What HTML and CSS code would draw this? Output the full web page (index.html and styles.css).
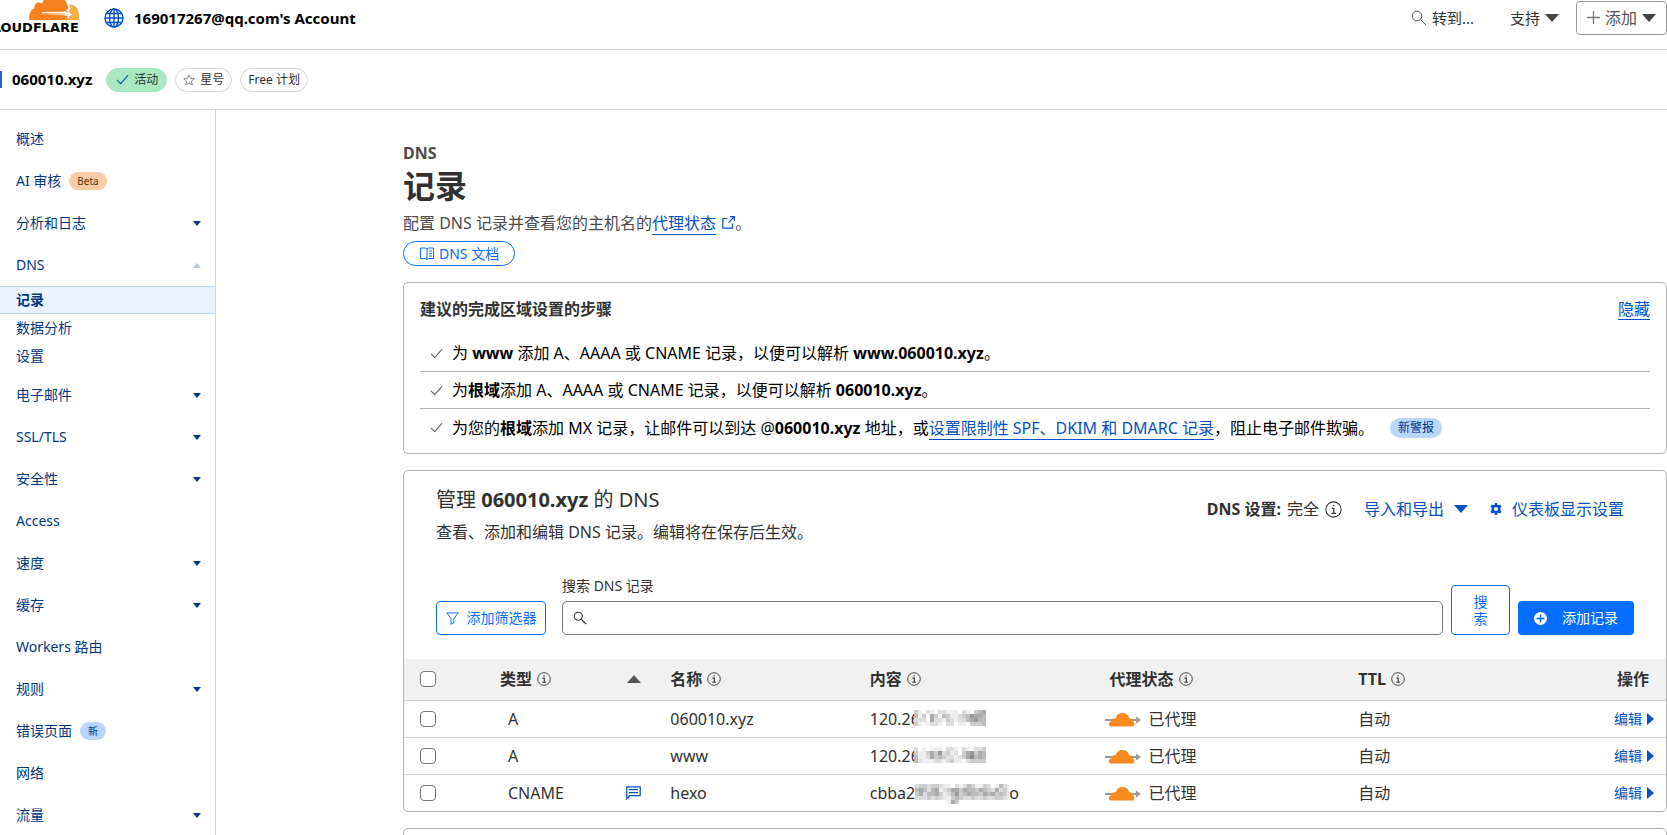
FILE: index.html
```html
<!DOCTYPE html>
<html lang="zh-CN">
<head>
    <meta charset="UTF-8">
    <meta name="viewport" content="width=device-width, initial-scale=1.0">
    <title>060010.xyz | DNS 记录</title>
    <link rel="stylesheet" href="styles.css">
</head>
<body>

    <!-- shared icons -->
    <svg class="sprite" aria-hidden="true">
        <symbol id="i-info" viewBox="0 0 16 16">
            <circle cx="8" cy="8" r="7.2" fill="none" stroke="currentColor"/>
            <path d="M6.3 7h2v4.5M6 11.7h4.4M7.4 4.4h1.3" fill="none" stroke="currentColor" stroke-width="1.2"/>
        </symbol>
        <symbol id="i-check" viewBox="0 0 14 12">
            <path d="M1 6.5l4 4L13 1.5" fill="none" stroke="currentColor" stroke-width="1.2"/>
        </symbol>
        <symbol id="i-search" viewBox="0 0 16 16">
            <circle cx="6" cy="6" r="4.6" fill="none" stroke="currentColor" stroke-width="1.3"/>
            <path d="M9.3 9.3L15 15" fill="none" stroke="currentColor" stroke-width="1.5"/>
        </symbol>
        <symbol id="i-proxy" viewBox="0 0 36 16">
            <path d="M0 7h31V4.5L36 8l-5 3.5V9H0z" fill="#999"/>
            <path d="M6 14.5c-2.6 0-3-5 .8-5.3C6.5 6.5 9 5.7 10.5 6.600 12 2.700 14 1 17.500 1c3.800 0 6 2.200 6.700 5.300 2-.4 3.200.6 3.200 2.600 2.600.6 2.600 5.600 0 5.600z" fill="#f6891f"/>
        </symbol>
    </svg>

    <header class="topbar">
        <a class="logo" href="#">
            <svg width="50" height="28" viewBox="0 0 50 28">
                <path d="M38 27c1-4 0-6.500-4-6.500L13 20.200c-.6-.2-.5-1 .2-1.100L34.500 18.800c2.600-.2 4.500-2.300 4.800-4C37.500 6.500 32 2 25.500 2c-6.500 0-11 4-12.500 8.500-3.600-2.400-8.300.2-7.700 5C2 15.900-.2 20.500.3 27z" fill="#f6821f"/>
                <path d="M37.500 27l1-3.500c1-3-.5-4.500-4-5l5-.5c3-1 2-6 .5-6.500 6-1 10.500 4.500 10 12v3.500z" fill="#fbad41"/>
                <path d="M12 21.500h22.500c3.500-.5 4.500-2 5-4.500 .5 2.500 1.500 3.800 4 4.500-2.500.7-3.500 2-4 4.500-.5-2.500-1.500-3.200-4-3.700z" fill="#fff"/>
            </svg>
            <span>CLOUDFLARE</span>
        </a>
        <a class="account" href="#">
            <svg width="20" height="20" viewBox="0 0 20 20" fill="none" stroke="#0051c3" stroke-width="1.4">
                <circle cx="10" cy="10" r="9"/>
                <ellipse cx="10" cy="10" rx="4.5" ry="9"/>
                <path d="M10 1v18M1 10h18M2.5 5.5h15M2.5 14.5h15"/>
            </svg>
            169017267@qq.com's Account
        </a>
        <div class="top-actions">
            <button class="goto">
                <svg width="16" height="16" viewBox="0 0 16 16" fill="none" stroke="#555"><circle cx="6" cy="6" r="4.8"/><path d="M9.5 9.5L15 15"/></svg>
                转到...
            </button>
            <button class="support">支持<i class="caret"></i></button>
            <button class="add">
                <svg width="13" height="13" viewBox="0 0 13 13"><path d="M6.5 0v13M0 6.5h13" stroke="#777" stroke-width="1.3"/></svg>
                添加<i class="caret"></i>
            </button>
        </div>
    </header>

    <div class="zonebar">
        <svg class="zone-icon" width="12" height="17" viewBox="0 0 12 17"><path d="M0 0h12v17H0z" fill="#2c62c9"/></svg>
        <h2>060010.xyz</h2>
        <span class="pill active"><svg width="13" height="11"><use href="#i-check"/></svg>活动</span>
        <button class="pill">
            <svg width="12" height="12" viewBox="0 0 12 12"><path d="M6 .9l1.5 3.500 3.800.3-2.900 2.500.9 3.700L6 8.900l-3.300 2 .9-3.700L.7 4.700l3.800-.3z" fill="none" stroke="#888"/></svg>
            星号
        </button>
        <span class="pill">Free 计划</span>
    </div>

    <div class="container">
        <nav class="sidebar">
            <a href="#">概述</a>
            <a href="#">AI 审核<span class="tag beta">Beta</span></a>
            <a href="#">分析和日志<i class="arrow"></i></a>
            <a href="#">DNS<i class="arrow up"></i></a>
            <div class="submenu">
                <a href="#" class="current">记录</a>
                <a href="#">数据分析</a>
                <a href="#">设置</a>
            </div>
            <a href="#">电子邮件<i class="arrow"></i></a>
            <a href="#">SSL/TLS<i class="arrow"></i></a>
            <a href="#">安全性<i class="arrow"></i></a>
            <a href="#">Access</a>
            <a href="#">速度<i class="arrow"></i></a>
            <a href="#">缓存<i class="arrow"></i></a>
            <a href="#">Workers 路由</a>
            <a href="#">规则<i class="arrow"></i></a>
            <a href="#">错误页面<span class="tag new">新</span></a>
            <a href="#">网络</a>
            <a href="#">流量<i class="arrow"></i></a>
        </nav>

        <main class="content">
            <div class="crumb">DNS</div>
            <h1>记录</h1>
            <p class="intro">配置 DNS 记录并查看您的主机名的<a href="#">代理状态</a>
                <svg width="13" height="13" viewBox="0 0 13 13" fill="none" stroke="#0051c3" stroke-width="1.2"><path d="M5.5 2.5H.8v9.7h9.7V7.5M8 .7h4.3V5M12.3.7L6.5 6.5"/></svg>。</p>
            <a class="docs" href="#">
                <svg width="14" height="13" viewBox="0 0 14 13" fill="none" stroke="#056dff"><path d="M.5 1h5L7 2l1.5-1h5v10.5h-5L7 12.5l-1.5-1h-5zM7 2v10M9 4h3M9 6.5h3M9 9h3"/></svg>
                DNS 文档
            </a>

            <section class="card steps">
                <div class="steps-head">
                    <h3>建议的完成区域设置的步骤</h3>
                    <a href="#">隐藏</a>
                </div>
                <ul>
                    <li><svg width="13" height="11"><use href="#i-check"/></svg><span>为 <b>www</b> 添加 A、AAAA 或 CNAME 记录，以便可以解析 <b>www.060010.xyz</b>。</span></li>
                    <li><svg width="13" height="11"><use href="#i-check"/></svg><span>为<b>根域</b>添加 A、AAAA 或 CNAME 记录，以便可以解析 <b>060010.xyz</b>。</span></li>
                    <li><svg width="13" height="11"><use href="#i-check"/></svg><span>为您的<b>根域</b>添加 MX 记录，让邮件可以到达 @<b>060010.xyz</b> 地址，或<a href="#">设置限制性 SPF、DKIM 和 DMARC 记录</a>，阻止电子邮件欺骗。</span><span class="tag alert">新警报</span></li>
                </ul>
            </section>

            <section class="card">
                <div class="manage-head">
                    <div>
                        <h2>管理 <b>060010.xyz</b> 的 DNS</h2>
                        <p>查看、添加和编辑 DNS 记录。编辑将在保存后生效。</p>
                    </div>
                    <div class="manage-links">
                        <span class="setup"><b>DNS 设置:</b> 完全 <svg width="17" height="17"><use href="#i-info"/></svg></span>
                        <button>导入和导出<i class="caret"></i></button>
                        <button>
                            <svg width="12" height="12" viewBox="0 0 12 12"><path d="M5 0h2l.4 1.7 1.2.6L10.3 1.5l1.2 1.9L10.3 4.8v2.4l1.2 1.4-1.2 1.9-1.7-.8-1.2.6L7 12H5l-.4-1.7-1.2-.6-1.7.8L.5 8.6l1.2-1.4V4.8L.5 3.4l1.2-1.9 1.7.8 1.2-.6zM6 4a2 2 0 100 4 2 2 0 000-4z" fill="#0051c3" fill-rule="evenodd"/></svg>
                            仪表板显示设置
                        </button>
                    </div>
                </div>

                <form class="filters" onsubmit="return false">
                    <button class="outline filter">
                        <svg width="13" height="13" viewBox="0 0 13 13" fill="none" stroke="#056dff"><path d="M.8.9h11.4L8 6.5v3.8L5 12.3V6.5z"/></svg>
                        添加筛选器
                    </button>
                    <div class="search">
                        <label for="dnsSearch">搜索 DNS 记录</label>
                        <div class="search-box">
                            <svg width="14" height="14"><use href="#i-search"/></svg>
                            <input type="text" id="dnsSearch">
                        </div>
                    </div>
                    <button class="outline submit">搜<br>索</button>
                    <button class="primary">
                        <svg width="13" height="13" viewBox="0 0 13 13"><circle cx="6.5" cy="6.5" r="6.5" fill="#fff"/><path d="M6.5 2.5v8M2.5 6.5h8" stroke="#056dff" stroke-width="1.4"/></svg>
                        添加记录
                    </button>
                </form>

                <table>
                    <colgroup>
                        <col class="c-check"><col class="c-type"><col class="c-name"><col class="c-content"><col class="c-proxy"><col class="c-ttl"><col>
                    </colgroup>
                    <thead>
                        <tr>
                            <th><input type="checkbox" aria-label="全选"></th>
                            <th><div class="th">类型 <svg width="14" height="14"><use href="#i-info"/></svg><i class="caret sort"></i></div></th>
                            <th><div class="th">名称 <svg width="14" height="14"><use href="#i-info"/></svg></div></th>
                            <th><div class="th">内容 <svg width="14" height="14"><use href="#i-info"/></svg></div></th>
                            <th><div class="th">代理状态 <svg width="14" height="14"><use href="#i-info"/></svg></div></th>
                            <th><div class="th">TTL <svg width="14" height="14"><use href="#i-info"/></svg></div></th>
                            <th class="right">操作</th>
                        </tr>
                    </thead>
                    <tbody>
                        <tr>
                            <td><input type="checkbox" aria-label="060010.xyz"></td>
                            <td class="type">A</td>
                            <td>060010.xyz</td>
                            <td>120.26<svg class="mosaic over" data-rows="cefdefddeeefdefcba becfacebceedcb9aab dddfaddecdeddba9bb cefeddefddfeefcccb"></svg></td>
                            <td class="proxy"><svg width="36" height="16"><use href="#i-proxy"/></svg>已代理</td>
                            <td>自动</td>
                            <td class="edit"><button>编辑<i class="play"></i></button></td>
                        </tr>
                        <tr>
                            <td><input type="checkbox" aria-label="www"></td>
                            <td class="type">A</td>
                            <td>www</td>
                            <td>120.26<svg class="mosaic over" data-rows="dfefeeefddefdefddc ceecac9dcedfca9cab beedacbcddedca8bab bdeeeddedceefdcccc"></svg></td>
                            <td class="proxy"><svg width="36" height="16"><use href="#i-proxy"/></svg>已代理</td>
                            <td>自动</td>
                            <td class="edit"><button>编辑<i class="play"></i></button></td>
                        </tr>
                        <tr>
                            <td><input type="checkbox" aria-label="hexo"></td>
                            <td class="type"><div class="th">CNAME
                                <svg class="note" width="15" height="14" viewBox="0 0 15 14" fill="none" stroke="#0051c3" stroke-width="1.2"><path d="M.8.9h13.4v8.8H4L.8 12.8zM3 3.7h9M3 6.7h9"/></svg></div></td>
                            <td>hexo</td>
                            <td>cbba2<svg class="mosaic" data-rows="dccdccdeefdedbceecdfebde babdbaedcaacabbcabcdadce cadbbacedb9cbabbcabacbce dddcdcdeecbcddcddcddccde ffffffffeacfffffffffffff"></svg>o</td>
                            <td class="proxy"><svg width="36" height="16"><use href="#i-proxy"/></svg>已代理</td>
                            <td>自动</td>
                            <td class="edit"><button>编辑<i class="play"></i></button></td>
                        </tr>
                    </tbody>
                </table>
            </section>

            <section class="card next"></section>
        </main>
    </div>

    <script>
        // each hex digit is the grey level of one 4px block
        document.querySelectorAll('.mosaic').forEach(svg => {
            svg.dataset.rows.split(' ').forEach((row, y) => {
                [...row].forEach((level, x) => {
                    let rect = document.createElementNS('http://www.w3.org/2000/svg', 'rect');
                    rect.setAttribute('x', x * 4);
                    rect.setAttribute('y', y * 4);
                    rect.setAttribute('width', 4);
                    rect.setAttribute('height', 4);
                    rect.setAttribute('fill', '#' + level.repeat(3));
                    svg.appendChild(rect);
                });
            });
        });
    </script>

</body>
</html>
```
FILE: styles.css
```css
* {
    box-sizing: border-box;
}
body {
    font-family: "Noto Sans", "Noto Sans CJK SC", sans-serif;
    font-size: 16px;
    line-height: 24px;
    margin: 0;
    height: 100vh;
    display: flex;
    flex-direction: column;
    overflow: hidden;
    background-color: white;
    color: #313131;
}
h1, h2, h3, p, ul {
    margin: 0;
    padding: 0;
}
button {
    font: inherit;
    color: inherit;
    background: none;
    border: none;
    padding: 0;
    cursor: pointer;
    display: flex;
    align-items: center;
}
a {
    color: #0051c3;
    text-decoration: none;
}
svg {
    flex-shrink: 0;
}
.sprite {
    display: none;
}
.caret {
    border: 7px solid transparent;
    border-top: 8px solid currentColor;
    border-bottom: none;
}

/* top bar */
.topbar {
    flex-shrink: 0;
    display: flex;
    height: 50px;
    padding-bottom: 14px;
    align-items: center;
    border-bottom: 1px solid #d5d5d5;
}
.logo {
    width: 79px;
    height: 35px;
    display: flex;
    flex-direction: column;
    align-items: flex-end;
    justify-content: flex-end;
    overflow: hidden;
    color: black;
    font: bold 13px/14px "DejaVu Sans", sans-serif;
}
.account {
    display: flex;
    align-items: center;
    gap: 10px;
    margin-left: 25px;
    color: black;
    font-size: 15px;
    font-weight: bold;
}
.top-actions {
    margin-left: auto;
    display: flex;
    align-items: center;
    font-size: 15px;
}
.goto {
    gap: 5px;
    margin-right: 36px;
}
.support {
    gap: 5px;
    margin-right: 17px;
}
.top-actions .caret {
    color: #444;
}
.add {
    gap: 5px;
    height: 34px;
    padding: 0 10px;
    font-size: 16px;
    color: #555;
    border: 1px solid #999;
    border-radius: 4px;
}

/* zone bar */
.zonebar {
    flex-shrink: 0;
    display: flex;
    align-items: center;
    gap: 8px;
    height: 60px;
    border-bottom: 1px solid #d5d5d5;
}
.zone-icon {
    margin-left: -10px;
}
.zonebar h2 {
    font-size: 15px;
    color: black;
    margin: 0 6px 2px 2px;
}
.pill {
    display: flex;
    align-items: center;
    gap: 5px;
    height: 24px;
    padding: 0 7px;
    font-size: 12px;
    border: 1px solid #d5d5d5;
    border-radius: 12px;
}
.pill.active {
    background-color: #a8e9c0;
    border-color: #a8e9c0;
    padding: 0 8px 0 9px;
}
.pill.active svg {
    color: #0051c3;
}

/* sidebar */
.container {
    display: flex;
    flex: 1;
    min-height: 0;
    overflow: hidden;
}
.sidebar {
    width: 216px;
    flex-shrink: 0;
    padding-top: 8px;
    overflow: hidden;
    border-right: 1px solid #d5d5d5;
}
.sidebar a {
    display: flex;
    align-items: center;
    height: 42px;
    padding: 0 14px 0 16px;
    font-size: 14px;
    color: #003681;
}
.submenu {
    margin-bottom: 4px;
}
.submenu a {
    height: 28px;
}
.submenu .current {
    font-weight: bold;
    background-color: #ebf3ff;
    border: 1px solid #b6d4ff;
    border-width: 1px 0;
}
.arrow {
    margin-left: auto;
    border: 4px solid transparent;
    border-top: 5px solid #003681;
    border-bottom: none;
}
.arrow.up {
    border-top: none;
    border-bottom: 5px solid #b9c7dc;
}
.tag {
    height: 18px;
    line-height: 18px;
    padding: 0 8px;
    margin-left: 8px;
    font-size: 10px;
    border-radius: 10px;
}
.beta {
    background-color: #fbcda5;
    color: #5a2d00;
}
.new, .alert {
    background-color: #b9d6ff;
    color: #003681;
}
.steps .alert {
    height: 20px;
    line-height: 20px;
    font-size: 12px;
    margin-left: 16px;
}

/* main column */
.content {
    flex: 1;
    min-width: 0;
    padding: 31px 0 0 187px;
}
.crumb {
    font-weight: bold;
    color: #4a4a4a;
}
h1 {
    font-size: 32px;
    line-height: 42px;
}
.intro {
    margin-top: 2px;
    line-height: 28px;
    color: #4a4a4a;
}
.intro a, .steps a {
    border-bottom: 1px solid #0051c3;
}
.intro svg {
    margin-left: 2px;
}
.docs {
    display: inline-flex;
    align-items: center;
    gap: 5px;
    height: 25px;
    padding: 0 15px 0 16px;
    margin-top: 4px;
    font-size: 14px;
    color: #056dff;
    border: 1px solid #056dff;
    border-radius: 13px;
    vertical-align: top;
}
.card {
    margin-top: 16px;
    border: 1px solid #b3b3b3;
    border-radius: 5px;
}
.next {
    height: 60px;
}
.steps {
    padding: 14px 16px 7px;
}
.steps-head {
    display: flex;
    justify-content: space-between;
    align-items: center;
    margin-bottom: 14px;
}
.steps-head h3 {
    font-size: 16px;
}
.steps-head a {
    line-height: 20px;
}
.steps ul {
    list-style: none;
    color: black;
}
.steps li {
    display: flex;
    align-items: center;
    height: 37px;
    padding-left: 10px;
    border-bottom: 1px solid #b3b3b3;
}
.steps li:last-child {
    border-bottom: none;
}
.steps li svg {
    margin-right: 9px;
    color: #666;
}

/* dns records */
.manage-head {
    display: flex;
    justify-content: space-between;
    align-items: flex-start;
    padding: 15px 32px 0;
}
.manage-head h2 {
    font-size: 20px;
    font-weight: normal;
    line-height: 28px;
}
.manage-head p {
    margin-top: 6px;
}
.manage-links {
    display: flex;
    align-items: center;
    padding: 11px 10px 0 0;
    gap: 22px;
}
.manage-links button {
    gap: 10px;
    color: #0051c3;
}
.setup {
    display: flex;
    align-items: center;
    gap: 6px;
}
.filters {
    display: flex;
    align-items: flex-end;
    gap: 8px;
    padding: 32px 32px 24px;
    font-size: 14px;
}
.filters button {
    height: 34px;
    border-radius: 4px;
    justify-content: center;
}
.filters .outline {
    color: #056dff;
    border: 1px solid #056dff;
}
.filters .filter {
    gap: 8px;
    width: 110px;
    margin-right: 8px;
}
.filters .submit {
    width: 59px;
    height: 50px;
    line-height: 17px;
}
.filters .primary {
    gap: 15px;
    width: 116px;
    color: white;
    background-color: #056dff;
}
.search {
    flex: 1;
}
.search label {
    display: block;
    line-height: 20px;
    margin-bottom: 5px;
}
.search-box {
    display: flex;
    align-items: center;
    height: 34px;
    padding-left: 10px;
    border: 1px solid #797979;
    border-radius: 5px;
}
.search-box input {
    flex: 1;
    height: 100%;
    font: inherit;
    border: none;
    outline: none;
    background: none;
}
table {
    width: 100%;
    table-layout: fixed;
    border-collapse: collapse;
}
.c-check {
    width: 80px;
}
.c-type {
    width: 13.5%;
}
.c-name {
    width: 15.8%;
}
.c-content {
    width: 19%;
}
.c-proxy {
    width: 19.7%;
}
.c-ttl {
    width: 14%;
}
th, td {
    height: 37px;
    padding: 0 0 0 16px;
    text-align: left;
    border-bottom: 1px solid #d5d5d5;
}
th {
    height: 41px;
    background-color: #f1f1f1;
}
tbody tr:last-child td {
    border-bottom: none;
}
.th {
    display: flex;
    align-items: center;
    gap: 5px;
}
.sort {
    color: #555;
    transform: rotate(180deg);
    margin: 0 13px 0 auto;
}
.note {
    margin: 0 13px 0 auto;
}
td.type {
    padding-left: 24px;
}
.right {
    text-align: right;
    padding-right: 17px;
}
input[type="checkbox"] {
    display: block;
    appearance: none;
    width: 16px;
    height: 16px;
    margin: 0;
    background-color: white;
    border: 1px solid #767676;
    border-radius: 4px;
}
.mosaic {
    width: 94px;
    height: 20px;
    vertical-align: middle;
    background-color: white;
}
/* hides half of the last digit */
.mosaic.over {
    margin-left: -6px;
}
.proxy svg {
    margin: 0 8px 0 -5px;
    vertical-align: middle;
}
.edit button {
    margin-left: auto;
    margin-right: 12px;
    gap: 5px;
    font-size: 14px;
    color: #0051c3;
}
.play {
    border: 6px solid transparent;
    border-left: 7px solid #0051c3;
    border-right: none;
}
```
